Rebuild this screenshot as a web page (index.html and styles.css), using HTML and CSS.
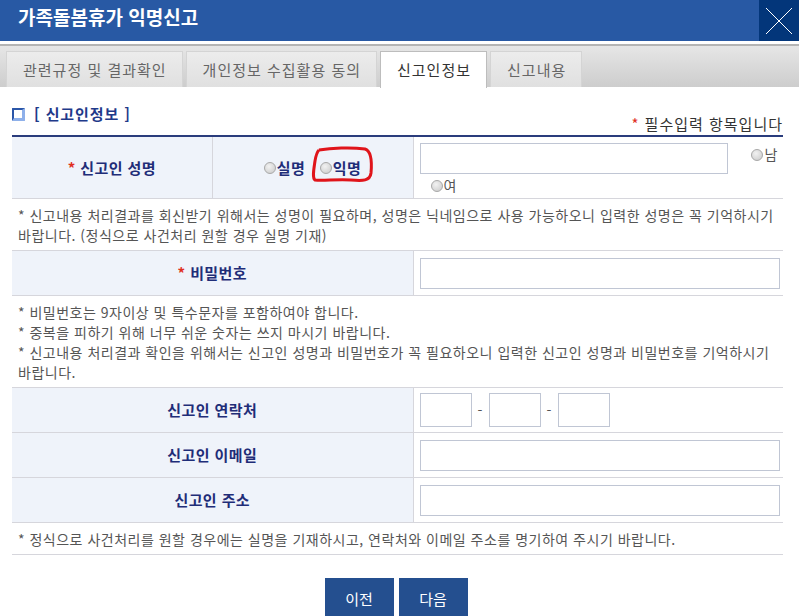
FILE: index.html
```html
<!DOCTYPE html>
<html lang="ko">
<head>
  <meta charset="UTF-8" />
  <meta name="viewport" content="width=device-width, initial-scale=1.0"/>
  <title>가족돌봄휴가 익명신고</title>
  <link rel="stylesheet" href="styles.css">
</head>
<body>
<div class="popup">
  <header class="pop-head">
    <h1>가족돌봄휴가 익명신고</h1>
    <button class="close-btn" aria-label="닫기">
      <svg width="28" height="28" viewBox="0 0 28 28"><path d="M1 1L27 27M27 1L1 27" stroke="#fff" stroke-width="1" fill="none"/></svg>
    </button>
  </header>

  <nav class="tabs">
    <a class="tab">관련규정 및 결과확인</a>
    <a class="tab">개인정보 수집활용 동의</a>
    <a class="tab on">신고인정보</a>
    <a class="tab">신고내용</a>
  </nav>

  <div class="content">
    <div class="sec-head">
      <h2 class="sec-title"><span class="sq"></span>[ 신고인정보 ]</h2>
      <p class="req"><span class="star">*</span> 필수입력 항목입니다</p>
    </div>

    <table class="form-tbl">
      <colgroup>
        <col style="width:200px">
        <col style="width:201px">
        <col>
      </colgroup>
      <tr class="row-name">
        <th><span class="star">*</span> 신고인 성명</th>
        <th class="radio-cell">
          <label><input type="radio" name="nm">실명</label>
          <label class="anon"><input type="radio" name="nm">익명
            <svg class="mark" width="64" height="38" viewBox="0 0 64 38"><path d="M8 4C20 2 40 1 54 3C60 5 61 16 60 27C59 35 52 35 40 34C26 33 12 35 4 34C1 32 3 22 4 15C5 9 6 6 8 4" stroke="#e0141a" stroke-width="3" fill="none" stroke-linejoin="round"/></svg>
          </label>
        </th>
        <td>
          <input type="text" class="inp name-inp">
          <label class="sex m"><input type="radio" name="sx">남</label>
          <label class="sex f"><input type="radio" name="sx">여</label>
        </td>
      </tr>
      <tr class="note">
        <td colspan="3">* 신고내용 처리결과를 회신받기 위해서는 성명이 필요하며, 성명은 닉네임으로 사용 가능하오니 입력한 성명은 꼭 기억하시기 바랍니다. (정식으로 사건처리 원할 경우 실명 기재)</td>
      </tr>
      <tr>
        <th colspan="2"><span class="star">*</span> 비밀번호</th>
        <td><input type="password" class="inp full"></td>
      </tr>
      <tr class="note">
        <td colspan="3">* 비밀번호는 9자이상 및 특수문자를 포함하여야 합니다.<br>* 중복을 피하기 위해 너무 쉬운 숫자는 쓰지 마시기 바랍니다.<br>* 신고내용 처리결과 확인을 위해서는 신고인 성명과 비밀번호가 꼭 필요하오니 입력한 신고인 성명과 비밀번호를 기억하시기 바랍니다.</td>
      </tr>
      <tr>
        <th colspan="2">신고인 연락처</th>
        <td>
          <div class="tel">
            <input type="text" class="inp sm"><span class="dash">-</span><input type="text" class="inp sm"><span class="dash">-</span><input type="text" class="inp sm">
          </div>
        </td>
      </tr>
      <tr>
        <th colspan="2">신고인 이메일</th>
        <td><input type="text" class="inp full"></td>
      </tr>
      <tr>
        <th colspan="2">신고인 주소</th>
        <td><input type="text" class="inp full"></td>
      </tr>
      <tr class="note">
        <td colspan="3">* 정식으로 사건처리를 원할 경우에는 실명을 기재하시고, 연락처와 이메일 주소를 명기하여 주시기 바랍니다.</td>
      </tr>
    </table>

    <div class="btns">
      <button class="btn">이전</button>
      <button class="btn">다음</button>
    </div>
  </div>
</div>
</body>
</html>
```

FILE: styles.css
```css
body {
  margin: 0;
  font-family: "Noto Sans CJK KR", "Noto Sans", sans-serif;
  background: #fff;
  color: #555;
  font-size: 14px;
  line-height: 20px;
}
.popup {
  width: 799px;
  height: 616px;
  overflow: hidden;
}
.pop-head {
  display: flex;
  justify-content: space-between;
  height: 41px;
  background: #2859a4;
}
.pop-head h1 {
  margin: 0;
  padding-left: 18px;
  color: #fff;
  font-size: 19px;
  font-weight: bold;
  line-height: 33px;
}
.close-btn {
  width: 40px;
  height: 41px;
  border: none;
  padding: 0;
  background: #03367a;
  display: flex;
  justify-content: center;
  align-items: center;
  cursor: pointer;
}
.tabs {
  display: flex;
  gap: 3px;
  margin-top: 3px;
  height: 43px;
  padding: 5px 0 0 6px;
  box-sizing: border-box;
  border-top: 2px solid #b4b4b4;
  background: linear-gradient(#e6e6e6, #cdcdcd);
}
.tab {
  display: block;
  height: 36px;
  line-height: 36px;
  padding: 0 15px 0 16px;
  box-sizing: border-box;
  border: 1px solid #d4d4d4;
  border-bottom: none;
  background: linear-gradient(#ececec, #e0e0e0);
  color: #666;
  font-size: 15px;
  letter-spacing: 1px;
}
.tab.on {
  background: #fff;
  color: #333;
  border: 1px solid #bdbdbd;
  border-bottom: none;
  height: 37px;
}
.content {
  padding: 0 16px 0 12px;
}
.sec-head {
  display: flex;
  justify-content: space-between;
  align-items: flex-end;
  height: 48px;
}
.sec-title {
  display: flex;
  align-items: center;
  gap: 9px;
  margin: 0 0 11px;
  font-size: 15px;
  font-weight: bold;
  color: #1f3a8a;
  letter-spacing: 0.9px;
}
.sq {
  width: 8px;
  height: 8px;
  border: 2px solid #2b56a8;
  border-right-width: 3px;
  border-bottom-width: 3px;
  border-right-color: #8eb0ea;
  border-bottom-color: #8eb0ea;
  background: #fff;
  border-radius: 1px;
}
.req {
  margin: 0 0 1px;
  font-size: 15px;
  color: #333;
  letter-spacing: 1px;
}
.star {
  color: #e0301e;
}
.form-tbl {
  width: 771px;
  border-collapse: collapse;
  table-layout: fixed;
  border-top: 2px solid #2a3c7c;
}
.form-tbl th,
.form-tbl td {
  border-bottom: 1px solid #d6d6dc;
  padding: 0;
}
.form-tbl th {
  background: #eff3fa;
  color: #1f2d78;
  font-size: 15px;
  font-weight: bold;
  height: 44px;
  text-align: center;
  letter-spacing: 0.4px;
}
.form-tbl th + th,
.form-tbl th + td {
  border-left: 1px solid #d6d6dc;
}
.form-tbl td {
  padding: 0 4px 0 6px;
  height: 44px;
}
.row-name th,
.row-name td {
  height: 61px;
}
.row-name td {
  vertical-align: top;
  padding-top: 6px;
  box-sizing: border-box;
}
.radio-cell label {
  display: inline-flex;
  align-items: center;
  position: relative;
}
.radio-cell .anon {
  margin-left: 10px;
}
.mark {
  position: absolute;
  left: -9px;
  top: -12px;
}
input[type="radio"] {
  appearance: none;
  width: 12px;
  height: 12px;
  margin: 0 1px 0 0;
  border-radius: 50%;
  border: 1px solid #a9a9a9;
  background: radial-gradient(circle at 40% 35%, #f2f2f2, #c8c8c8);
  vertical-align: -1px;
}
.inp {
  height: 31px;
  box-sizing: border-box;
  border: 1px solid #c0c6d4;
  background: #fff;
  vertical-align: middle;
}
.full {
  width: 360px;
}
.name-inp {
  width: 308px;
}
.sex {
  color: #555;
}
.sex.m {
  margin-left: 20px;
  vertical-align: 2px;
}
.sex.f {
  display: block;
  margin: 1px 0 0 11px;
}
.tel {
  display: flex;
  align-items: center;
}
.tel .sm {
  width: 52px;
  height: 34px;
}
.dash {
  width: 17px;
  text-align: center;
  color: #555;
}
.note td {
  padding: 6px 6px 5px 6px;
  height: auto;
  line-height: 20px;
  color: #555;
  letter-spacing: 0.5px;
}
.btns {
  display: flex;
  justify-content: center;
  gap: 5px;
  margin-top: 23px;
  padding-right: 3px;
}
.btn {
  width: 69px;
  height: 40px;
  border: none;
  background: #244f8f;
  color: #fff;
  font-family: inherit;
  font-size: 15px;
}
```
